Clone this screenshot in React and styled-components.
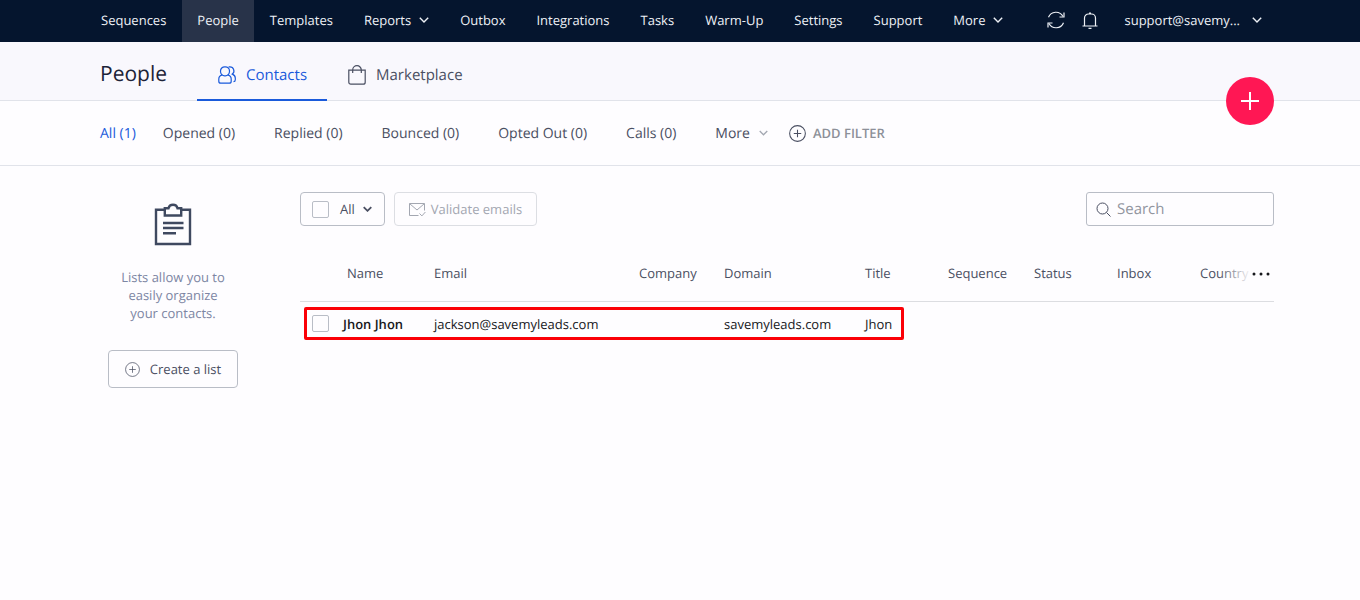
import React from 'react';
import styled, { createGlobalStyle } from 'styled-components';

const color = {
  navy: '#05152e',
  navyActive: '#283349',
  page: '#fefdff',
  header: '#f9f8fd',
  line: '#e1e3ea',
  border: '#b9bdc6',
  text: '#4a4f62',
  dark: '#1c2338',
  icon: '#3f4960',
  muted: '#7d86a3',
  disabled: '#a3a7b1',
  blue: '#1a5adb',
  pink: '#ff1754',
};

const GlobalStyle = createGlobalStyle`
  * {
    box-sizing: border-box;
  }
  body {
    margin: 0;
    min-height: 100vh;
    background: ${color.page};
    color: ${color.text};
    font-family: 'Open Sans', 'Noto Sans', sans-serif;
    font-size: 13px;
    text-rendering: geometricPrecision;
  }
  button, input {
    font: inherit;
    color: inherit;
    text-rendering: inherit;
  }
  button {
    padding: 0;
    border: none;
    background: none;
    cursor: pointer;
  }
  svg {
    display: block;
    flex: none;
  }
`;

const TopBar = styled.nav`
  display: flex;
  gap: 1px;
  height: 42px;
  padding: 0 86px;
  background: ${color.navy};
`;

const TopLink = styled.a`
  display: flex;
  align-items: center;
  gap: 8px;
  padding: 0 15px 2px;
  background: ${({ $active }) => ($active ? color.navyActive : 'transparent')};
  color: #eef1f6;
  text-decoration: none;
  white-space: nowrap;
`;

const TopActions = styled.div`
  display: flex;
  align-items: center;
  gap: 17px;
  margin-left: auto;
  padding: 0 12px 2px 0;
  color: #eef1f6;
`;

const Account = styled.button`
  display: flex;
  align-items: center;
  gap: 12px;
  margin-left: 9px;
`;

const PageHeader = styled.header`
  position: relative;
  display: flex;
  height: 59px;
  padding: 0 86px 0 100px;
  border-bottom: 1px solid ${color.line};
  background: ${color.header};
`;

const Title = styled.h1`
  margin: 0 30px 0 0;
  color: ${color.dark};
  font-size: 21px;
  font-weight: 400;
  line-height: 64px;
`;

const Tab = styled.a`
  display: flex;
  align-items: center;
  gap: 10px;
  height: 59px;
  padding: 8px 20px 0 21px;
  border-bottom: 2px solid ${({ $active }) => ($active ? color.blue : 'transparent')};
  color: ${({ $active }) => ($active ? color.blue : color.text)};
  font-size: 15px;
  text-decoration: none;
`;

const AddButton = styled.button`
  position: absolute;
  right: 86px;
  bottom: -25px;
  display: flex;
  align-items: center;
  justify-content: center;
  width: 48px;
  height: 48px;
  border-radius: 50%;
  background: ${color.pink};
  color: #fff;
`;

const Filters = styled.div`
  display: flex;
  align-items: center;
  gap: 3px;
  height: 65px;
  padding: 0 86px 0 100px;
  border-bottom: 1px solid ${color.line};
`;

const Filter = styled.button`
  display: flex;
  align-items: center;
  gap: 9px;
  padding: 0 18px;
  color: ${({ $active }) => ($active ? color.blue : color.text)};
  font-size: 14px;
  white-space: nowrap;

  &:first-child {
    padding: 0 6px 0 0;
  }
  svg {
    color: ${color.disabled};
  }
`;

const AddFilter = styled.button`
  display: flex;
  align-items: center;
  gap: 7px;
  color: #8d9099;
  font-weight: 600;

  svg {
    color: ${color.text};
  }
`;

const Content = styled.div`
  display: flex;
  gap: 54px;
  padding: 26px 86px 0 100px;
`;

const Sidebar = styled.aside`
  display: flex;
  flex: none;
  flex-direction: column;
  align-items: center;
  width: 146px;
  padding-top: 11px;
  color: ${color.icon};
`;

const Hint = styled.p`
  width: 120px;
  margin: 22px 0 28px;
  color: ${color.muted};
  line-height: 18px;
  text-align: center;
`;

const Button = styled.button`
  display: flex;
  align-items: center;
  gap: ${({ $tall }) => ($tall ? 10 : 5)}px;
  height: ${({ $tall }) => ($tall ? 38 : 34)}px;
  padding: 0 ${({ $tall }) => ($tall ? 16 : 14)}px;
  border: 1px solid ${color.border};
  border-radius: 4px;
  color: ${color.text};
  white-space: nowrap;

  &:disabled {
    border-color: #dcdee3;
    color: ${color.disabled};
  }
`;

const Main = styled.main`
  flex: 1;
  min-width: 0;
`;

const Toolbar = styled.div`
  display: flex;
  align-items: center;
  gap: 9px;
`;

const SelectAll = styled.div`
  display: flex;
  align-items: center;
  gap: 11px;
  height: 34px;
  padding: 0 12px 0 11px;
  border: 1px solid ${color.border};
  border-radius: 4px;

  button {
    display: flex;
    align-items: center;
    gap: 8px;
  }
`;

const Checkbox = styled.input.attrs({ type: 'checkbox' })`
  display: block;
  width: 17px;
  height: 17px;
  margin: 0;
  border: 1px solid ${color.border};
  border-radius: 2px;
  appearance: none;
`;

const Search = styled.label`
  display: flex;
  align-items: center;
  gap: 6px;
  width: 188px;
  height: 34px;
  margin-left: auto;
  padding: 0 9px;
  border: 1px solid ${color.border};
  border-radius: 3px;

  input {
    flex: 1;
    min-width: 0;
    padding: 0;
    border: none;
    outline: 0;
    background: none;
    font-size: 15px;
  }
  input::placeholder {
    color: #92969f;
    opacity: 1;
  }
`;

const TableArea = styled.div`
  position: relative;
  margin-top: 20px;
`;

const Table = styled.table`
  width: 100%;
  border-collapse: separate;
  border-spacing: 0;
  table-layout: fixed;

  th, td {
    padding: 0;
    text-align: left;
    white-space: nowrap;
  }
  th {
    height: 56px;
    padding-bottom: 2px;
    border-bottom: 1px solid #dcdde1;
    font-weight: 400;
  }
  th:nth-child(2) {
    padding-left: 4px;
  }
  td {
    height: 44px;
    padding-bottom: 1px;
    color: #17181c;
  }
  td:nth-child(2) {
    font-weight: 600;
  }
  td:first-child {
    padding-left: 12px;
  }
`;

const Col = styled.col`
  width: ${({ $width }) => ($width ? `${$width}px` : 'auto')};
`;

const ColumnMenu = styled.button`
  position: absolute;
  top: 17px;
  right: 0;
  display: flex;
  justify-content: flex-end;
  width: 56px;
  padding: 9px 4px 9px 0;
  background: linear-gradient(to right, rgba(254, 253, 255, 0), ${color.page} 60%);
  color: #17181c;
`;

const Highlight = styled.div`
  position: absolute;
  top: 61px;
  left: 4px;
  width: 600px;
  height: 33px;
  border: 3px solid #fb0007;
  border-radius: 2px;
  pointer-events: none;
`;

const Icon = ({ width, height, box, stroke = 1, children }) => (
  <svg
    width={width}
    height={height || width}
    viewBox={box || `0 0 ${width} ${height || width}`}
    fill="none"
    stroke="currentColor"
    strokeWidth={stroke}
    aria-hidden="true"
  >
    {children}
  </svg>
);

const Chevron = ({ width = 10, stroke = 1.4 }) => (
  <Icon width={width} height={6} box="0 0 10 6" stroke={stroke}>
    <path d="M.8.8 5 5 9.2.8" />
  </Icon>
);

const PlusCircle = ({ size, stroke }) => (
  <Icon width={size} box="0 0 16 16" stroke={stroke}>
    <circle cx="8" cy="8" r="7.4" />
    <path d="M8 4.5v7M4.5 8h7" />
  </Icon>
);

const RefreshIcon = () => (
  <Icon width={18} stroke={1.2}>
    <path d="M1.5 6.3A8 8 0 0 1 16 5.5M16.5 11.7A8 8 0 0 1 2 12.5" />
    <path d="M17 1.5V6h-4.5M1 16.5V12h4.5" />
  </Icon>
);

const BellIcon = () => (
  <Icon width={16} height={17} stroke={1.2}>
    <path d="M.5 14h15M2.5 14V6a4 4 0 0 1 4-4h3a4 4 0 0 1 4 4v8M7 1.200h2M6.500 16.300h3" />
  </Icon>
);

const ContactsIcon = () => (
  <Icon width={18} stroke={1.2}>
    <rect x="2.5" y=".8" width="9" height="9" rx="4.2" />
    <path d="M4.300 8.800C1.800 9.500.8 11 .8 13v2.200c0 1.300.7 2 2 2h8.400c1.300 0 2-.7 2-2V13c0-2-1-3.500-3.500-4.200" />
    <path d="M10.600.9h1.200a4 4 0 0 1 2.500 7.200c2 .8 3 2.100 3 4v1.700c0 1.200-.6 1.900-1.800 1.900" />
  </Icon>
);

const BagIcon = () => (
  <Icon width={18} height={20} stroke={1.2}>
    <path d="M.8 5.200h16.400v12c0 1.300-.8 2-2 2H2.800c-1.200 0-2-.7-2-2zM4.700 8V5a4.300 4.300 0 0 1 8.600 0v3" />
  </Icon>
);

const ClipboardIcon = () => (
  <Icon width={38} height={43} stroke={2.4}>
    <path d="M10 6.800H2v34.200h34V6.800h-8" />
    <path d="M10.800 12.500V5.200h3.700c.5-2 2.200-3.400 4.500-3.400s4 1.400 4.500 3.400h3.700v7.300z" />
    <path d="M9 20h20.500M9 25h20.500M9 30.200h13" />
  </Icon>
);

const MailIcon = () => (
  <Icon width={17} height={15}>
    <path d="M9.500 13.500H.5v-12h15v7M.8 1.800 8 8l7.200-6.200M10.500 11.500l2.400 2.400 3.500-3.900" />
  </Icon>
);

const SearchIcon = () => (
  <Icon width={15}>
    <circle cx="6.5" cy="6.5" r="5.500" />
    <path d="m10.5 10.5 4 4" />
  </Icon>
);

const links = [
  { name: 'Sequences' },
  { name: 'People', active: true },
  { name: 'Templates' },
  { name: 'Reports', menu: true },
  { name: 'Outbox' },
  { name: 'Integrations' },
  { name: 'Tasks' },
  { name: 'Warm-Up' },
  { name: 'Settings' },
  { name: 'Support' },
  { name: 'More', menu: true },
];

const filters = [
  'All (1)',
  'Opened (0)',
  'Replied (0)',
  'Bounced (0)',
  'Opted Out (0)',
  'Calls (0)',
];

const columns = [
  { name: 'Name', width: 91 },
  { name: 'Email', width: 205 },
  { name: 'Company', width: 85 },
  { name: 'Domain', width: 141 },
  { name: 'Title', width: 83 },
  { name: 'Sequence', width: 86 },
  { name: 'Status', width: 83 },
  { name: 'Inbox', width: 83 },
  { name: 'Country' },
];

const contacts = [
  {
    Name: 'Jhon Jhon',
    Email: 'jackson@savemyleads.com',
    Domain: 'savemyleads.com',
    Title: 'Jhon',
  },
];

const App = () => (
  <>
    <GlobalStyle />
    <TopBar>
      {links.map(({ name, active, menu }) => (
        <TopLink key={name} href="#" $active={active}>
          {name}
          {menu && <Chevron />}
        </TopLink>
      ))}
      <TopActions>
        <button type="button" aria-label="Refresh">
          <RefreshIcon />
        </button>
        <button type="button" aria-label="Notifications">
          <BellIcon />
        </button>
        <Account type="button">
          support@savemy...
          <Chevron />
        </Account>
      </TopActions>
    </TopBar>
    <PageHeader>
      <Title>People</Title>
      <Tab href="#" $active>
        <ContactsIcon />
        Contacts
      </Tab>
      <Tab href="#">
        <BagIcon />
        Marketplace
      </Tab>
      <AddButton type="button" aria-label="Add contact">
        <Icon width={18} stroke={2}>
          <path d="M9 0v18M0 9h18" />
        </Icon>
      </AddButton>
    </PageHeader>
    <Filters>
      {filters.map((name, i) => (
        <Filter key={name} type="button" $active={i === 0}>
          {name}
        </Filter>
      ))}
      <Filter type="button">
        More
        <Chevron width={9} />
      </Filter>
      <AddFilter type="button">
        <PlusCircle size={17} />
        ADD FILTER
      </AddFilter>
    </Filters>
    <Content>
      <Sidebar>
        <ClipboardIcon />
        <Hint>Lists allow you to easily organize your contacts.</Hint>
        <Button type="button" $tall>
          <PlusCircle size={15} stroke={0.8} />
          Create a list
        </Button>
      </Sidebar>
      <Main>
        <Toolbar>
          <SelectAll>
            <Checkbox aria-label="Select all" />
            <button type="button">
              All
              <Chevron width={9} stroke={2} />
            </button>
          </SelectAll>
          <Button type="button" disabled>
            <MailIcon />
            Validate emails
          </Button>
          <Search>
            <SearchIcon />
            <input type="text" placeholder="Search" aria-label="Search" />
          </Search>
        </Toolbar>
        <TableArea>
          <Table>
            <colgroup>
              <Col $width={43} />
              {columns.map(({ name, width }) => (
                <Col key={name} $width={width} />
              ))}
            </colgroup>
            <thead>
              <tr>
                <th aria-label="Select" />
                {columns.map(({ name }) => (
                  <th key={name}>{name}</th>
                ))}
              </tr>
            </thead>
            <tbody>
              {contacts.map((contact) => (
                <tr key={contact.Email}>
                  <td>
                    <Checkbox aria-label={`Select ${contact.Name}`} />
                  </td>
                  {columns.map(({ name }) => (
                    <td key={name}>{contact[name]}</td>
                  ))}
                </tr>
              ))}
            </tbody>
          </Table>
          <ColumnMenu type="button" aria-label="Choose columns">
            <svg width="18" height="4" viewBox="0 0 18 4" fill="currentColor">
              <circle cx="2" cy="2" r="1.5" />
              <circle cx="9" cy="2" r="1.5" />
              <circle cx="16" cy="2" r="1.5" />
            </svg>
          </ColumnMenu>
          <Highlight />
        </TableArea>
      </Main>
    </Content>
  </>
);

export default App;
